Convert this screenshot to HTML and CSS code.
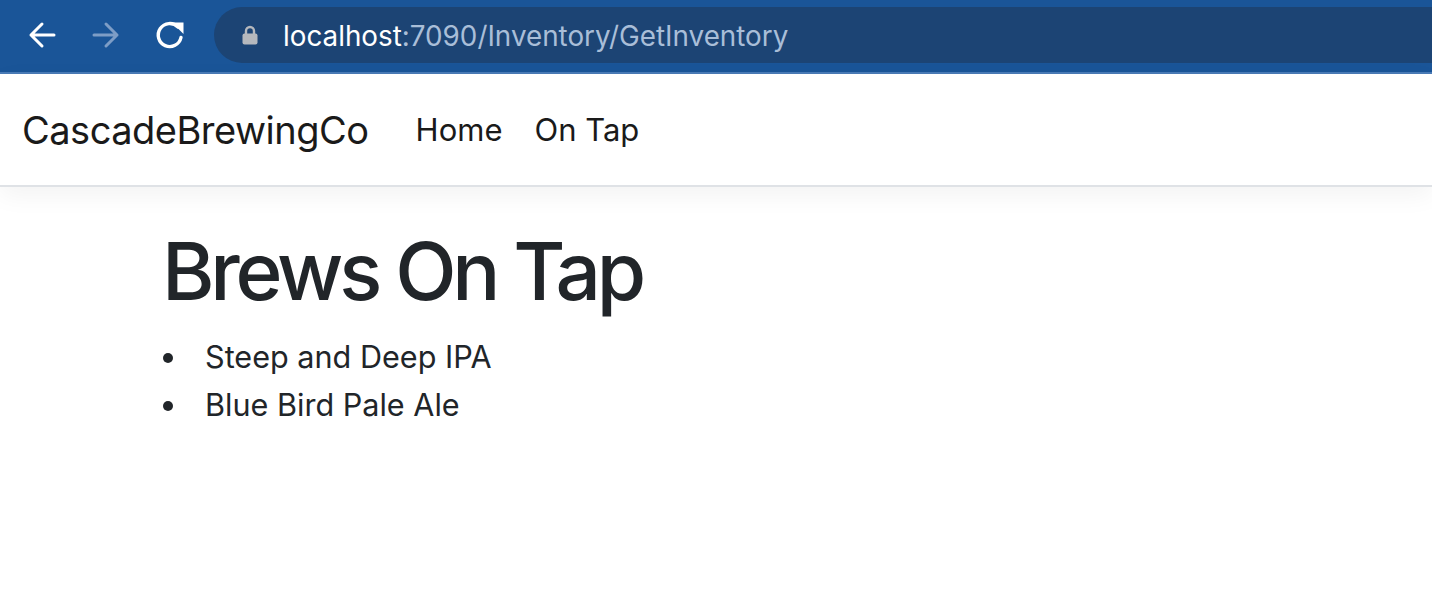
FILE: index.html
```html
<!DOCTYPE html>
<html lang="en">
<head>
<meta charset="utf-8">
<title>Brews On Tap</title>
<link rel="stylesheet" href="styles.css">
</head>
<body>
<div class="toolbar">
  <div class="nav-buttons">
    <svg class="icon" viewBox="0 0 28 28" width="28" height="28">
      <path d="M26 14H3M14 3L3 14L14 25" fill="none" stroke="#ffffff" stroke-width="3" stroke-linecap="round" stroke-linejoin="round"/>
    </svg>
    <svg class="icon" viewBox="0 0 28 28" width="28" height="28">
      <path d="M2 14H25M14 3L25 14L14 25" fill="none" stroke="#7d9dc6" stroke-width="3" stroke-linecap="round" stroke-linejoin="round"/>
    </svg>
    <svg class="icon" viewBox="0 0 30 30" width="30" height="30">
      <path d="M26 17.5A11.5 11.5 0 1 1 23 7" fill="none" stroke="#ffffff" stroke-width="3.4" stroke-linecap="round"/>
      <path d="M17 2.5H28.5V14Z" fill="#ffffff"/>
    </svg>
  </div>
  <div class="omnibox">
    <svg class="lock" viewBox="0 0 16 20" width="16" height="20">
      <path d="M4 9V6a4 4 0 0 1 8 0v3" fill="none" stroke="#b5b8bd" stroke-width="2.4"/>
      <rect x="0.5" y="8.5" width="15" height="11" rx="2" fill="#b5b8bd"/>
    </svg>
    <span class="url"><span class="host">localhost</span>:7090/Inventory/GetInventory</span>
  </div>
</div>
<header class="navbar">
  <a class="brand" href="#">CascadeBrewingCo</a>
  <nav class="links">
    <a class="link" href="#">Home</a>
    <a class="link" href="#">On Tap</a>
  </nav>
</header>
<main class="content">
  <h1 class="title">Brews On Tap</h1>
  <ul class="brews">
    <li>Steep and Deep IPA</li>
    <li>Blue Bird Pale Ale</li>
  </ul>
</main>
</body>
</html>
```
FILE: styles.css
```css
* { box-sizing: border-box; }
html, body { margin: 0; padding: 0; background: #ffffff; }
body {
  font-family: Inter, "Liberation Sans", sans-serif;
  color: #212529;
  overflow: hidden;
}
.toolbar {
  height: 74px;
  background: #1a5598;
  border-bottom: 2px solid #4a7bb7;
  display: flex;
  align-items: center;
}
.nav-buttons {
  display: flex;
  align-items: center;
  gap: 36px;
  padding-left: 28px;
  width: 214px;
  margin-top: -2px;
}
.nav-buttons .icon:last-child { margin-left: -1px; }
.icon { display: block; flex: none; }
.omnibox {
  flex: 1;
  height: 56px;
  margin-top: -2px;
  background: #1c4474;
  border-radius: 28px 0 0 28px;
  display: flex;
  align-items: center;
  padding-left: 28px;
}
.lock { display: block; margin-right: 25px; margin-top: -1px; }
.url {
  font-size: 27.8px;
  color: #a9bed8;
  margin-top: 1px;
}
.host { color: #ffffff; }
.navbar {
  height: 113px;
  background: #ffffff;
  border-bottom: 2px solid #dfe2e6;
  box-shadow: 0 8px 24px rgba(0, 0, 0, 0.05);
  display: flex;
  align-items: center;
  padding-left: 22px;
  position: relative;
}
.brand {
  font-size: 38px;
  color: #1a1a1a;
  text-decoration: none;
  margin-right: 47px;
  letter-spacing: -0.5px;
}
.links { display: flex; gap: 32px; }
.link {
  font-size: 31px;
  color: #1a1a1a;
  text-decoration: none;
}
.content { padding-left: 162px; }
.title {
  margin: 36px 0 14px;
  font-size: 80px;
  font-weight: 500;
  line-height: 96px;
  letter-spacing: -4.2px;
}
.brews {
  margin: 0;
  padding: 0;
  list-style: none;
  font-size: 30.6px;
  line-height: 48px;
}
.brews li {
  display: flex;
  align-items: center;
}
.brews li::before {
  content: "";
  width: 10px;
  height: 10px;
  border-radius: 50%;
  background: #212529;
  margin: 2px 32px 0 1px;
  flex: none;
}
```
